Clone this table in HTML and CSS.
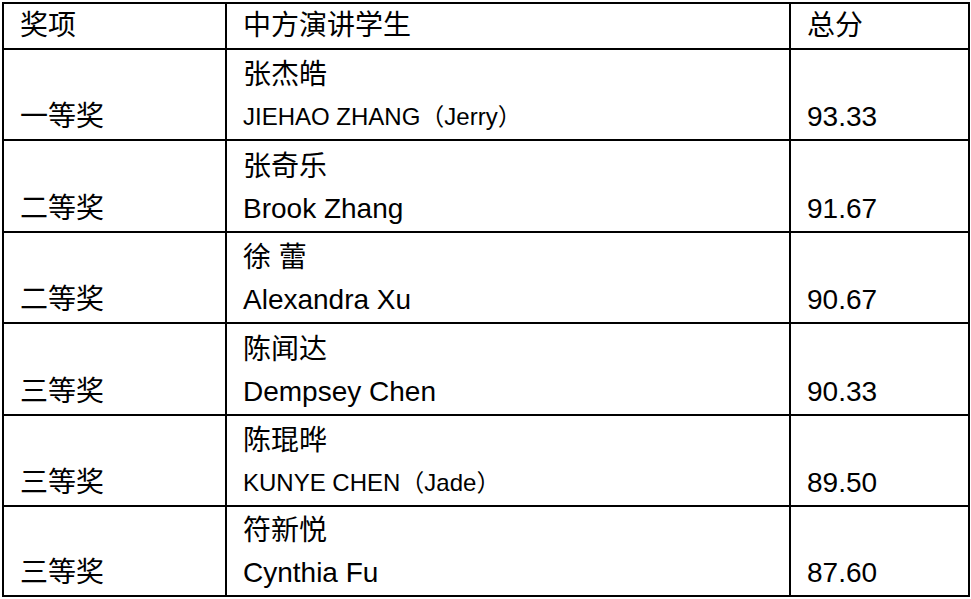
FILE: index.html
```html
<!DOCTYPE html>
<html lang="zh">
<head>
<meta charset="utf-8">
<title>获奖名单</title>
<link rel="stylesheet" href="styles.css">
</head>
<body>
<table class="awards">
  <colgroup>
    <col class="c-award">
    <col class="c-name">
    <col class="c-score">
  </colgroup>
  <thead>
    <tr class="head">
      <th>奖项</th>
      <th>中方演讲学生</th>
      <th>总分</th>
    </tr>
  </thead>
  <tbody>
    <tr class="r89">
      <td>一等奖</td>
      <td><div class="zh">张杰皓</div><div class="en small">JIEHAO ZHANG（Jerry）</div></td>
      <td>93.33</td>
    </tr>
    <tr class="r90">
      <td>二等奖</td>
      <td><div class="zh">张奇乐</div><div class="en">Brook Zhang</div></td>
      <td>91.67</td>
    </tr>
    <tr class="r89">
      <td>二等奖</td>
      <td><div class="zh">徐 蕾</div><div class="en">Alexandra Xu</div></td>
      <td>90.67</td>
    </tr>
    <tr class="r90">
      <td>三等奖</td>
      <td><div class="zh">陈闻达</div><div class="en">Dempsey Chen</div></td>
      <td>90.33</td>
    </tr>
    <tr class="r89">
      <td>三等奖</td>
      <td><div class="zh">陈琨晔</div><div class="en small">KUNYE CHEN（Jade）</div></td>
      <td>89.50</td>
    </tr>
    <tr class="r88">
      <td>三等奖</td>
      <td><div class="zh">符新悦</div><div class="en">Cynthia Fu</div></td>
      <td>87.60</td>
    </tr>
  </tbody>
</table>
</body>
</html>
```
FILE: styles.css
```css
html, body {
  margin: 0;
  padding: 0;
  background: #fff;
}

body {
  padding: 2px 0 0 2px;
  font-family: "Liberation Sans", Arial, "Noto Sans CJK SC", sans-serif;
  color: #000;
}

.awards {
  border-collapse: separate;
  border-spacing: 2px;
  background: #000;
  table-layout: fixed;
  width: 968px;
}

.c-award { width: 221px; }
.c-name { width: 562px; }
.c-score { width: 177px; }

.awards th,
.awards td {
  background: #fff;
  padding: 0 0 0 16px;
  font-size: 28px;
  font-weight: normal;
  text-align: left;
  line-height: 44px;
  vertical-align: bottom;
  white-space: nowrap;
}

.head th {
  height: 44px;
  vertical-align: middle;
}

.r88 td { height: 88px; }
.r89 td { height: 89px; }
.r90 td { height: 90px; }

.zh,
.en {
  height: 44px;
  line-height: 44px;
}

.zh {
  height: 42px;
  padding-top: 2px;
}

.en.small {
  font-size: 24px;
}
```
